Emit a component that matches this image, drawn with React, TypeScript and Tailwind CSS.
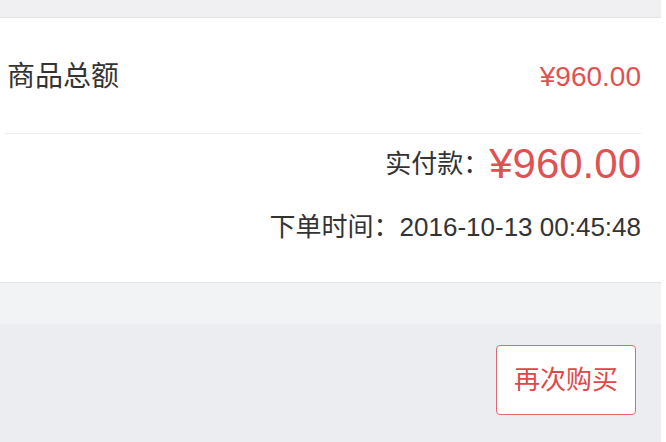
import React from 'react'

const font = { fontFamily: '"Liberation Sans", "Noto Sans CJK SC", sans-serif' }

const OrderSummary: React.FC = () => {
  return (
    <div className="flex h-[442px] w-[666px] overflow-hidden bg-white" style={font}>
      <div className="flex w-[661px] flex-col">
        <div className="h-[18px] border-b border-[#e4e4e6] bg-[#f0f0f2]"></div>
        <div className="bg-white pl-[5px] pr-[20px]">
          <div className="flex h-[116px] items-center justify-between border-b border-[#ececee] pl-[2px] pt-[3px]">
            <span className="text-[28px] leading-none text-[#333]">商品总额</span>
            <span className="text-[28px] leading-none text-[#e05252]">¥960.00</span>
          </div>
          <div className="flex flex-col items-end pb-[40px] pt-[9px]">
            <div className="flex h-[42px] items-center">
              <span className="text-[26px] text-[#333]">实付款：</span>
              <span className="text-[42px] leading-none text-[#e05252]">¥960.00</span>
            </div>
            <div className="mt-[27px] flex h-[30px] items-center text-[26px] text-[#333]">
              下单时间：2016-10-13 00:45:48
            </div>
          </div>
        </div>
        <div className="h-[42px] border-t border-[#e4e4e6] bg-[#f2f3f5]"></div>
        <div className="flex flex-1 justify-end bg-[#ebedf0] pr-[25px] pt-[21px]">
          <button className="h-[70px] w-[140px] rounded-[4px] border border-[#e06a6a] bg-white text-[26px] text-[#e04848]">
            再次购买
          </button>
        </div>
      </div>
    </div>
  )
}

export default function App() {
  return <OrderSummary />
}
